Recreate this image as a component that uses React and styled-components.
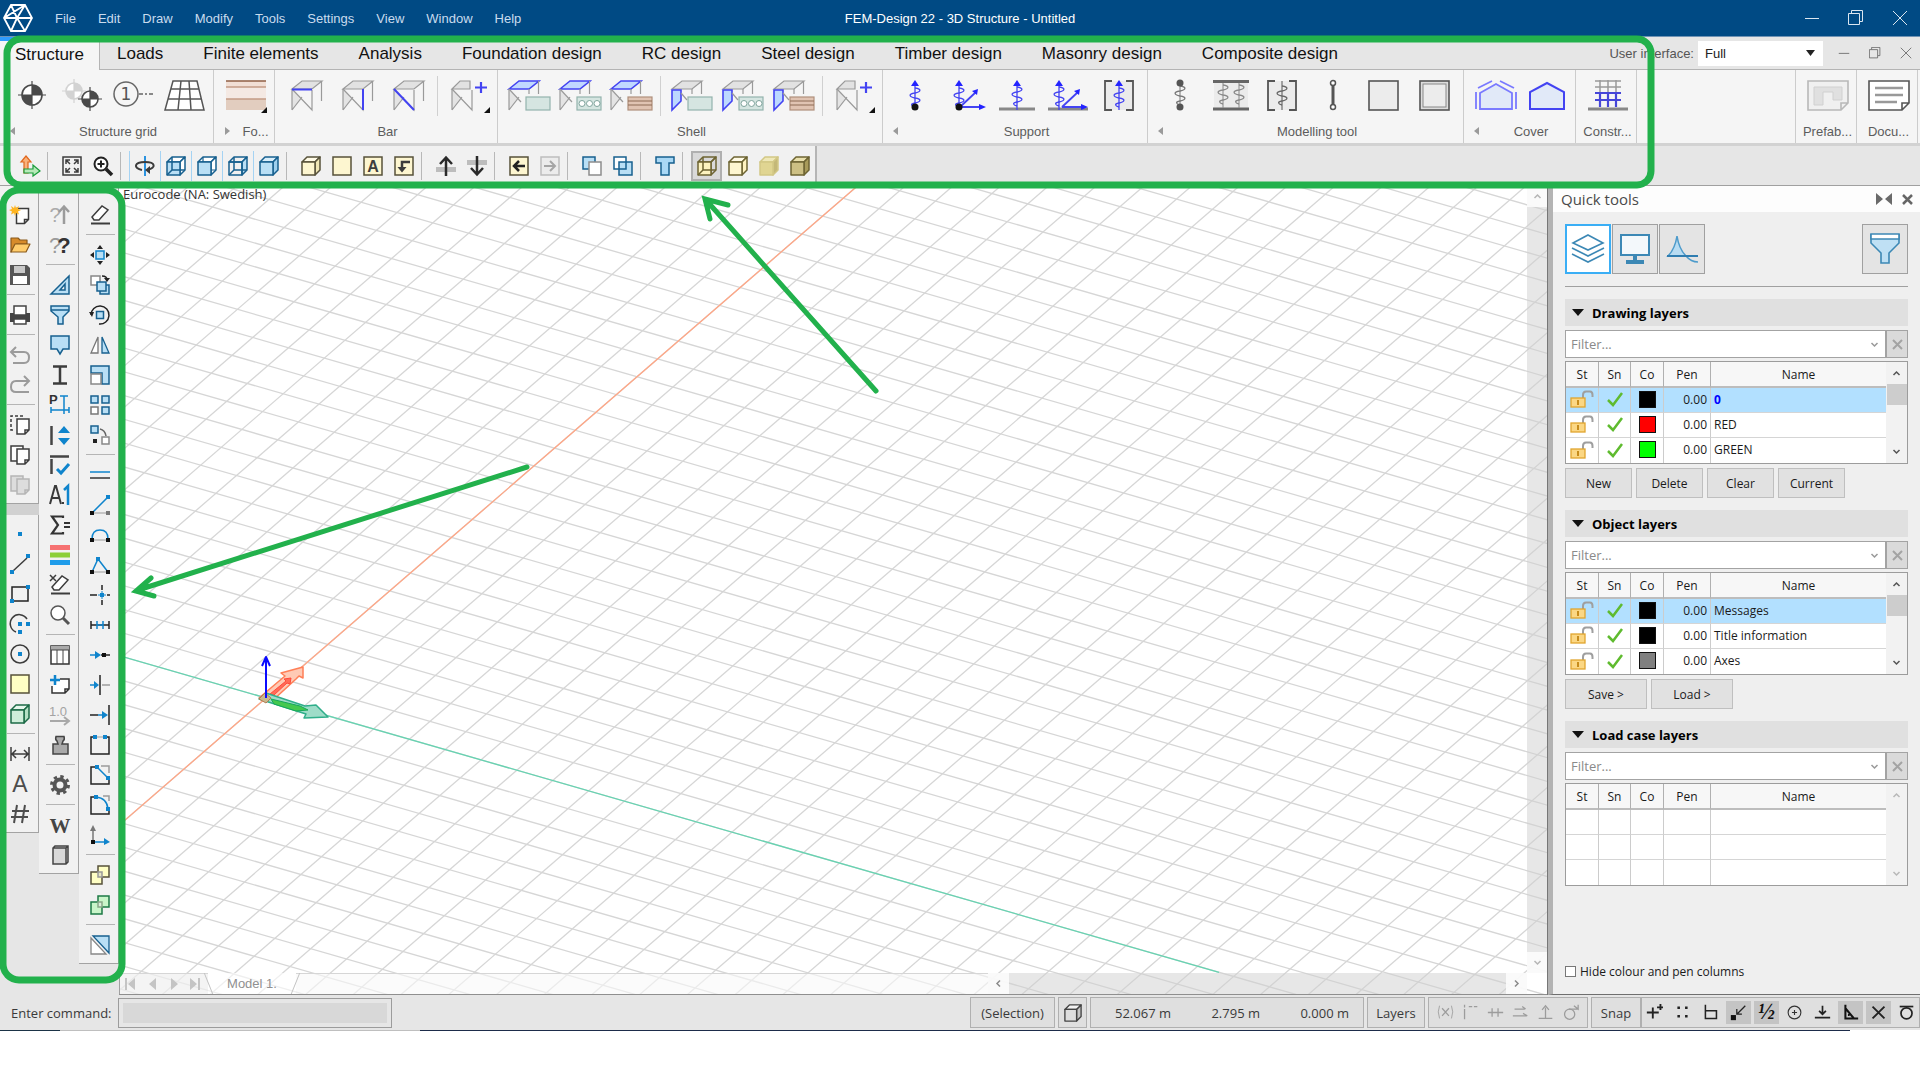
import React from 'react';
import styled, { createGlobalStyle, css } from 'styled-components';

const GlobalStyle = createGlobalStyle`
  * {
    box-sizing: border-box;
  }

  body {
    margin: 0;
    background: #ffffff;
    font-family: "Open Sans", "Noto Sans", sans-serif;
    font-size: 12px;
    color: #1a1a1a;
  }

  button, input, select {
    font: inherit;
    color: inherit;
    margin: 0;
  }

  svg {
    display: block;
    flex: none;
  }
`

/* ---------- colours used by the drawings ---------- */

const dark = '#3c3c3c';
const grey = '#9b9b9b';
const blue = '#0f84cc';
const navy = '#17608f';
const sky = '#b9dff5';
const cream = '#fdf6d0';
const olive = '#57523a';
const violet = '#4343f2';

/* ---------- small 20x20 icons ---------- */

const Dot = ({ x, y, c = blue }) => <rect x={x - 2} y={y - 2} width="4" height="4" fill={c} />;

const Cube = ({ front, top, side, line, wire }) => (
  <g stroke={line} strokeWidth="1.5" strokeLinejoin="round">
    <path d="M1 6 L6 1 H19 L14 6 Z" fill={top} />
    <path d="M14 6 L19 1 V14 L14 19 Z" fill={side} />
    <rect x="1" y="6" width="13" height="13" fill={front} />
    {wire && <path d="M6 1 V14 H19 M6 14 L1 19" fill="none" />}
  </g>
);

const Page = ({ x = 0, y = 0, fill = '#fff', line = dark }) => (
  <path
    d={`M${x} ${y} H${x + 12} V${y + 11} L${x + 8} ${y + 15} H${x} Z M${x + 8} ${y + 15} V${y + 11} H${x + 12}`}
    fill={fill} stroke={line} strokeWidth="1.5"
  />
);

const Eraser = () => (
  <g fill="none" stroke={dark} strokeWidth="1.5">
    <path d="M2 12 L12 1 L18 5 L9 15 H4 Z" fill="#fff" />
    <path d="M1 18.5 H20" strokeWidth="2" />
  </g>
);

const icons = {
  ucs: (
    <g strokeWidth="1.2">
      <path d="M4 17 V6 H1 L6 0 L11 6 H8 V17 Z" fill="#f9b27c" stroke="#e0661c" />
      <path d="M4 13 H13 V9 L20 15 L13 20 V17 H4 Z" fill="#b7eab9" stroke="#1a9c3a" />
    </g>
  ),
  fit: (
    <g fill="none" stroke={dark} strokeWidth="1.5">
      <rect x="1" y="1" width="18" height="18" />
      <path d="M4 8 V4 H8 M4 4 L8 8 M12 4 H16 V8 M16 4 L12 8 M4 12 V16 H8 M4 16 L8 12 M16 12 V16 H12 M16 16 L12 12" />
    </g>
  ),
  zoomIn: (
    <g fill="none" stroke="#222" strokeWidth="2">
      <circle cx="8" cy="8" r="6.5" fill="#fff" />
      <path d="M13 13 L19 19" strokeWidth="3.5" />
      <path d="M8 4.5 V11.5 M4.5 8 H11.5" />
    </g>
  ),
  orbit: (
    <g fill="none" stroke={dark} strokeWidth="2">
      <path d="M10 0 V20" stroke="#2b93e0" />
      <path d="M7 14 C-2 12 -1 6 10 6 C21 6 21 12 13 13.5" />
      <path d="M10 14 L15 10 V18 Z" fill={dark} stroke="none" />
    </g>
  ),
  cubeWire: <Cube front={sky} top="#fff" side="#fff" line={navy} wire />,
  cubeFront: (
    <g>
      <Cube front={sky} top="#fff" side="#fff" line={navy} />
      <path d="M6 1 V6 M14 14 H19" stroke={navy} strokeWidth="1.2" />
    </g>
  ),
  cubeOpen: <Cube front="none" top="none" side={sky} line={navy} wire />,
  cubeBlue: <Cube front={sky} top="#d9eefa" side="#9fd0ee" line={navy} />,
  cubeCream: <Cube front={cream} top="#fffbe6" side="#efe6b5" line={olive} />,
  square: <rect x="1" y="1" width="18" height="18" fill={cream} stroke={olive} strokeWidth="1.5" />,
  letterA: (
    <g>
      <rect x="1" y="1" width="18" height="18" fill={cream} stroke={olive} strokeWidth="1.5" />
      <text x="10" y="16" textAnchor="middle" fontSize="16" fontWeight="bold" fill="#3f3f3f" fontFamily="Liberation Sans, sans-serif">A</text>
    </g>
  ),
  turn: (
    <g>
      <rect x="1" y="1" width="18" height="18" fill={cream} stroke={olive} strokeWidth="1.5" />
      <path d="M16 6 H8 V14" fill="none" stroke={dark} strokeWidth="2.5" />
      <path d="M3.5 11 H12.5 L8 16.5 Z" fill={dark} />
    </g>
  ),
  raise: (
    <g>
      <path d="M0 11 H20 V16 H0 Z" fill="#bdbdbd" />
      <path d="M10 20 V3 M4 8 L10 1.5 L16 8" fill="none" stroke="#2a2a2a" strokeWidth="2.5" />
    </g>
  ),
  lower: (
    <g>
      <path d="M0 4 H20 V9 H0 Z" fill="#bdbdbd" />
      <path d="M10 0 V17 M4 12 L10 18.5 L16 12" fill="none" stroke="#2a2a2a" strokeWidth="2.5" />
    </g>
  ),
  back: (
    <g fill="none">
      <rect x="1" y="1" width="18" height="18" fill={cream} stroke={olive} strokeWidth="1.5" />
      <path d="M16 10 H5 M10 5 L5 10 L10 15" stroke="#222" strokeWidth="2.5" />
    </g>
  ),
  forward: (
    <g fill="none">
      <rect x="1" y="1" width="18" height="18" fill="#ececec" stroke="#bdbdbd" strokeWidth="1.5" />
      <path d="M4 10 H15 M10 5 L15 10 L10 15" stroke="#a5a5a5" strokeWidth="2" />
    </g>
  ),
  overA: (
    <g strokeWidth="1.5">
      <rect x="1" y="1" width="12" height="12" fill={sky} stroke={navy} />
      <rect x="7" y="6" width="12" height="13" fill="#fff" stroke="#8d8d8d" />
    </g>
  ),
  overB: (
    <g strokeWidth="1.5" stroke={navy}>
      <rect x="1" y="1" width="12" height="12" fill="#fff" />
      <rect x="6" y="6" width="13" height="13" fill={sky} />
      <path d="M6 13 H13 V6" fill="none" />
    </g>
  ),
  tee: <path d="M1 1 H19 V7 H14 V19 H6 V7 H1 Z" fill="#a9d8f5" stroke={navy} strokeWidth="1.5" />,
  shadeWire: <Cube front="#fdf3bf" top="none" side="none" line="#6d6433" wire />,
  shadeLight: <Cube front={cream} top="#fffbe6" side="#fff3c0" line="#6d6433" />,
  shadeFlat: <Cube front="#e0d592" top="#efe8b8" side="#c4b878" line="#d2c785" />,
  shadeFull: <Cube front="#cdc084" top="#e9e0ac" side="#a89b5a" line="#6d6433" />,

  /* file and drawing */
  newFile: (
    <g>
      <Page x={6.5} y={3.5} />
      <path d="M5 0 L6 3 L9 1 L8 4 L11 5 L8 6.5 L9 9.5 L6 8 L5 11 L4 8 L1 9.5 L2 6.5 L-1 5 L2 4 L1 1 L4 3 Z" fill="#ffb521" />
    </g>
  ),
  open: (
    <g stroke="#8a5a1c" strokeWidth="1.2" strokeLinejoin="round">
      <path d="M1 17 V3 H8 L10 5 H17 V9 H6 L1 17 Z" fill="#d78b2a" />
      <path d="M1 17 L5 9 H20 L16 17 Z" fill="#ffcc6b" />
    </g>
  ),
  save: (
    <g>
      <path d="M0 0 H17 L20 3 V20 H0 Z" fill="#555" />
      <rect x="4" y="1" width="11" height="7" fill="#c8c8c8" />
      <rect x="3" y="11" width="14" height="8" fill="#fff" />
    </g>
  ),
  print: (
    <g>
      <rect x="0" y="8" width="20" height="9" fill="#444" />
      <path d="M4 10 V1 H16 V10 Z" fill="#fff" stroke="#444" strokeWidth="1.5" />
      <path d="M4 14 H16 V19 H4 Z" fill="#fff" stroke="#444" strokeWidth="1.5" />
    </g>
  ),
  undo: <path d="M6 2 L1 7 L6 12 M1 7 H14 Q19 7 19 12.5 Q19 18 14 18 H3" fill="none" stroke={grey} strokeWidth="2" />,
  redo: <path d="M14 1 L19 6 L14 11 M19 6 H6 Q1 6 1 12 Q1 17 6 17 H19" fill="none" stroke={grey} strokeWidth="2" />,
  cut: (
    <g>
      <path d="M13 1 H1 V15 H5" fill="none" stroke={dark} strokeWidth="1.5" strokeDasharray="3 2" />
      <Page x={7} y={4} />
    </g>
  ),
  copy: <g><Page x={1} y={1} /><Page x={7} y={4} /></g>,
  paste: <g><Page x={1} y={1} fill="#ddd" line="#b5b5b5" /><Page x={7} y={4} fill="#ddd" line="#b5b5b5" /></g>,
  point: <rect x="8" y="8" width="4" height="4" fill={blue} />,
  line: <g><path d="M3 17 L17 4" stroke={dark} strokeWidth="1.5" /><Dot x={2} y={18} /><Dot x={18} y={2} /></g>,
  rect: <g><rect x="2" y="3" width="16" height="14" fill="none" stroke="#222" strokeWidth="1.5" /><Dot x={2} y={17} /><Dot x={18} y={3} /></g>,
  arc: (
    <g>
      <path d="M17 5 A9 9 0 1 0 6 18" fill="none" stroke={dark} strokeWidth="1.5" />
      <Dot x={10} y={10} /><Dot x={18} y={10} /><Dot x={10} y={18} />
    </g>
  ),
  circle: <g><circle cx="10" cy="10" r="9" fill="none" stroke={dark} strokeWidth="1.5" /><Dot x={10} y={10} /></g>,
  region: <rect x="1" y="1" width="18" height="18" fill="#ffffc4" stroke={olive} strokeWidth="1.5" />,
  solid: <Cube front="#cfeeda" top="#e6f7ec" side="#b4e0c4" line="#1d6b47" />,
  dimension: <path d="M1 3 V17 M19 3 V17 M2 10 H18 M6 6 L2 10 L6 14 M14 6 L18 10 L14 14" fill="none" stroke={dark} strokeWidth="1.5" />,
  text: <text x="10" y="18" textAnchor="middle" fontSize="23" fill="#4c4c4c" fontFamily="Liberation Sans, sans-serif">A</text>,
  hash: <path d="M7 1 L4 19 M15 1 L12 19 M2 7 H19 M1 13 H18" fill="none" stroke="#4c4c4c" strokeWidth="2" />,

  /* tools */
  askUp: (
    <g>
      <text x="5" y="17" textAnchor="middle" fontSize="20" fill="#ababab" fontFamily="Liberation Sans, sans-serif">?</text>
      <path d="M14 19 V3 M9 7 L14 1.5 L19 7" fill="none" stroke={grey} strokeWidth="2.5" />
    </g>
  ),
  ask: (
    <g fontFamily="Liberation Sans, sans-serif" textAnchor="middle" fontSize="22">
      <text x="5" y="18" fill="#9a9a9a">?</text>
      <text x="14" y="18" fill="#333" fontWeight="bold">?</text>
    </g>
  ),
  ruler: <path d="M1 19 L19 1 V19 Z M10 15 L15 9 V15 Z" fill={sky} fillRule="evenodd" stroke={navy} strokeWidth="1.5" />,
  funnel: <path d="M1 1 H19 V6 L13 12 V19 H8 V12 L1 6 Z M1 5 H19" fill={sky} stroke={navy} strokeWidth="1.5" />,
  bubble: <path d="M1 1 H19 V14 H13 L10 19 L7 14 H1 Z" fill={sky} stroke={navy} strokeWidth="1.5" />,
  profile: <path d="M3 1.5 H17 M10 1 V19 M3 18.5 H17" fill="none" stroke={dark} strokeWidth="2.5" />,
  profileDim: (
    <g>
      <text x="-1" y="9" fontSize="13" fontWeight="bold" fill="#333" fontFamily="Liberation Sans, sans-serif">P</text>
      <path d="M14 1 V19 M10 1 H18 M1 15 H19 M1 12 V18 M19 12 V18" fill="none" stroke={blue} strokeWidth="1.5" />
    </g>
  ),
  stretch: (
    <g>
      <path d="M1.5 1 V20" stroke="#444" strokeWidth="2.5" />
      <path d="M8 8 H20 L14 1 Z M8 13 H20 L14 20 Z" fill={blue} />
    </g>
  ),
  confirm: (
    <g fill="none" strokeWidth="2.5">
      <path d="M0 1.5 H19 M1.5 4 V19" stroke="#444" />
      <path d="M7 14 L11 18 L19 9" stroke={blue} strokeWidth="3" />
    </g>
  ),
  decimals: (
    <g>
      <path d="M0 19 L5 1 H6 L11 19 M2 13 H9" fill="none" stroke="#3a3a3a" strokeWidth="2" />
      <rect x="12" y="17" width="2" height="2" fill="#3a3a3a" />
      <path d="M14 5 L18 1 V20" fill="none" stroke={blue} strokeWidth="2.5" />
    </g>
  ),
  sum: <path d="M13 3 V1.5 H2 L8 10 L2 18.5 H13 V17 M14 8 H20 M14 12 H20" fill="none" stroke="#333" strokeWidth="2.2" />,
  bands: <g><rect y="0" width="20" height="5" fill="#f67272" /><rect y="7.5" width="20" height="5" fill="#8ccf38" /><rect y="15" width="20" height="5" fill="#1f9cea" /></g>,
  eraseX: <g><Eraser /><path d="M0 0 L6 6 M6 0 L0 6" stroke={dark} strokeWidth="1.5" /></g>,
  search: <g fill="none" stroke="#555"><circle cx="8" cy="8" r="7" fill="#fff" strokeWidth="1.5" /><path d="M13 13 L19 19" strokeWidth="3" /></g>,
  table: <g><rect x="1" y="1" width="18" height="18" fill="#fff" stroke="#333" strokeWidth="1.5" /><rect x="1" y="1" width="18" height="4" fill="#aaa" /><path d="M1 5 H19 M7 5 V19 M13 5 V19" stroke="#444" /></g>,
  addPage: <g><path d="M10 4 H19 V14 L15 18 H2 V11 M15 18 V14 H19" fill="#fff" stroke="#333" strokeWidth="1.5" /><path d="M5 0 V10 M0 5 H10" stroke={blue} strokeWidth="2.5" /></g>,
  one: (
    <g>
      <text x="-1" y="11" fontSize="13" fill="#a3a3a3" fontFamily="Liberation Sans, sans-serif">1.0</text>
      <path d="M0 16 H18 M14 12 L19 16 L14 20" fill="none" stroke="#a8a8a8" strokeWidth="2" />
    </g>
  ),
  weight: <path d="M3 19 V9 H8 L7 6 Q5 5 6 1.5 H14 Q15 5 13 6 L12 9 H18 V19 Z" fill="#a9a9a9" stroke="#444" strokeWidth="1.5" />,
  gear: (
    <g fill="none" stroke="#555">
      <circle cx="10" cy="10" r="5.5" strokeWidth="4" />
      <circle cx="10" cy="10" r="8.5" strokeWidth="3" strokeDasharray="3.34 3.34" />
    </g>
  ),
  word: <text x="10" y="18" textAnchor="middle" fontSize="21" fontWeight="bold" fill="#444" fontFamily="Liberation Serif, serif">W</text>,
  book: <path d="M3 3 L5 1 H18 V17 L16 19 H3 Z M3 3 H16 V19 M16 3 L18 1" fill="#d8d8d8" stroke="#444" strokeWidth="1.5" />,

  /* modify */
  eraser: <Eraser />,
  move: (
    <g>
      <rect x="6" y="6" width="8" height="8" fill={sky} stroke={blue} strokeWidth="1.5" />
      <path d="M10 0 L13 4 H7 Z M10 20 L13 16 H7 Z M0 10 L4 7 V13 Z M20 10 L16 7 V13 Z" fill="#222" />
    </g>
  ),
  duplicate: (
    <g strokeWidth="1.5">
      <rect x="1" y="1" width="9" height="9" fill="#fff" stroke="#888" />
      <rect x="10" y="10" width="9" height="9" fill={sky} stroke={navy} />
      <rect x="7" y="7" width="9" height="9" fill={sky} stroke={navy} />
      <path d="M12 1 Q17 1 17 5" fill="none" stroke="#222" />
      <path d="M14 3 H20 L17 7 Z" fill="#222" />
    </g>
  ),
  rotate: (
    <g fill="none" stroke="#222" strokeWidth="1.5">
      <path d="M1 10 A9 9 0 1 1 9 19" />
      <path d="M-1 7 H4 L2 12 Z" fill="#222" stroke="none" />
      <rect x="6.5" y="6.5" width="7" height="7" fill={sky} stroke={navy} />
    </g>
  ),
  mirror: <g strokeWidth="1.3"><path d="M8 2 V18 H1 Z" fill="#fff" stroke="#777" /><path d="M12 2 V18 H19 Z" fill={sky} stroke={navy} /></g>,
  scale: <g strokeWidth="1.5"><path d="M1 1 H19 V19 H12 V8 H1 Z" fill={sky} stroke={navy} /><rect x="1" y="9" width="10" height="10" fill="#fff" stroke="#888" /></g>,
  array: (
    <g strokeWidth="1.5" stroke={navy} fill={sky}>
      <rect x="1" y="1" width="7" height="7" /><rect x="12" y="1" width="7" height="7" />
      <rect x="1" y="12" width="7" height="7" fill="#fff" stroke="#777" /><rect x="12" y="12" width="7" height="7" />
    </g>
  ),
  align: (
    <g strokeWidth="1.5">
      <rect x="1" y="1" width="7" height="7" fill={sky} stroke={navy} />
      <rect x="12" y="12" width="7" height="7" fill="#fff" stroke="#888" />
      <path d="M10 4 Q15 5 16 11" fill="none" stroke="#666" />
      <Dot x={5} y={16} c="#222" />
    </g>
  ),
  parallel: <g strokeWidth="1.5"><path d="M0 7 H20" stroke={blue} /><path d="M0 13 H20" stroke="#333" /></g>,
  editLine: <g><path d="M2 18 L18 2" stroke={blue} strokeWidth="1.5" /><path d="M2 18 H16" stroke={grey} /><Dot x={2} y={18} c="#111" /><Dot x={18} y={18} c="#777" /><Dot x={18} y={2} /></g>,
  editArc: <g><path d="M2 14 Q2 5 10 5 Q18 5 18 14" fill="none" stroke={blue} strokeWidth="1.5" /><path d="M4 15 H16" stroke={grey} /><Dot x={2} y={15} c="#111" /><Dot x={18} y={15} c="#111" /></g>,
  editPoly: <g><path d="M2 17 L8 4 L18 17" fill="none" stroke={blue} strokeWidth="1.5" /><path d="M4 17 H16" stroke={grey} /><Dot x={2} y={17} c="#111" /><Dot x={18} y={17} c="#111" /><Dot x={8} y={4} /></g>,
  cross: <g><path d="M0 10 H7 M17 10 H20 M12 0 V5 M12 15 V20" stroke="#222" strokeWidth="1.5" /><path d="M8 10 H16 M12 6 V14" stroke={blue} /><Dot x={12} y={10} /></g>,
  divide: <g strokeWidth="1.5"><path d="M1 6 V14 M19 6 V14 M1 10 H19" stroke="#222" /><path d="M7 6 V14 M13 6 V14 M7 10 H13" stroke={blue} /></g>,
  join: <g><path d="M0 10 H6" stroke={blue} strokeWidth="1.5" /><path d="M5 6 L11 10 L5 14 Z" fill={blue} /><path d="M11 10 H20" stroke="#222" strokeWidth="1.5" /><Dot x={14} y={10} c="#111" /></g>,
  trim: <g><path d="M0 10 H5" stroke={blue} strokeWidth="1.5" /><path d="M4 6 L9 10 L4 14 Z" fill={blue} /><path d="M10 0 V20" stroke="#222" strokeWidth="1.5" /><path d="M12 10 H20" stroke={grey} strokeWidth="1.5" /></g>,
  extend: <g><path d="M0 10 H8" stroke="#222" strokeWidth="1.5" /><path d="M8 10 H13" stroke={blue} strokeWidth="1.5" /><path d="M12 6 L18 10 L12 14 Z" fill={blue} /><path d="M19 0 V20" stroke="#222" strokeWidth="1.5" /></g>,
  openRect: <g><path d="M5 2 H1 V19 H19 V2 H15" fill="none" stroke="#222" strokeWidth="1.5" /><path d="M7 2 H13" stroke={grey} /><Dot x={5} y={2} /><Dot x={15} y={2} /></g>,
  chamfer: <g fill="none" strokeWidth="1.5"><path d="M6 2 H1 V19 H19 V14" stroke="#222" /><path d="M11 1 H19 V8" stroke={grey} /><path d="M7 2 L18 13" stroke={blue} /><Dot x={7} y={2} /><Dot x={18} y={13} /></g>,
  fillet: <g fill="none" strokeWidth="1.5"><path d="M6 2 H1 V19 H19 V15" stroke="#222" /><path d="M13 1 H19 V6" stroke={grey} /><path d="M6 2 Q17 3 18 14" stroke={blue} /><Dot x={6} y={2} /><Dot x={18} y={14} /></g>,
  axes: <g><path d="M3 16 V4" stroke="#777" strokeWidth="1.5" /><path d="M0 6 H6 L3 0 Z" fill="#777" /><path d="M3 17 H15" stroke={blue} strokeWidth="1.5" /><path d="M14 13 V20 L20 17 Z" fill={blue} /><Dot x={3} y={17} c="#111" /></g>,
  unionY: <g strokeWidth="1.5" stroke={olive}><path d="M8 1 H19 V12 H12 V19 H1 V7 H8 Z" fill="#ffffc4" /><path d="M8 7 H12 V12 H8 Z" fill="#e9e9c4" stroke="#999" /></g>,
  unionG: <g strokeWidth="1.5" stroke="#1d7a45"><path d="M8 1 H19 V12 H12 V19 H1 V7 H8 Z" fill="#c9f5c9" /><path d="M8 7 H12 V12 H8 Z" fill="#dfeedd" stroke="#88a888" /></g>,
  split: <g strokeWidth="1.3"><path d="M3 1 H19 V18 Z" fill={sky} stroke={navy} /><path d="M1 3 V19 H16 Z" fill="#fff" stroke="#888" /></g>,

  /* status bar */
  axisX: <g><path d="M3 2 Q0 9 3 17 M17 2 Q20 9 17 17" fill="none" stroke="currentColor" /><path d="M6 5 L14 14 M14 5 L6 14" stroke="currentColor" strokeWidth="1.5" /></g>,
  guideV: <path d="M3 6 V18 M3 1 V4 M8 3 H12 M14 3 H18" stroke="currentColor" strokeWidth="1.5" />,
  guideH: <path d="M1 10 H19 M6 5 V15 M13 5 V15" stroke="currentColor" strokeWidth="1.5" />,
  guideP: <path d="M3 6 H15 M1 14 H17 M12 3 L16 6 M13 11 L18 14" fill="none" stroke="currentColor" strokeWidth="1.5" />,
  guideT: <path d="M2 17 H18 M10 17 V4 M6 7 L10 2 L14 7" fill="none" stroke="currentColor" strokeWidth="1.5" />,
  tangent: <g fill="none" stroke="currentColor" strokeWidth="1.5"><circle cx="9" cy="12" r="6" /><path d="M8 6 H19 M14 2 L19 6 V1" /></g>,
  snapPlus: <path d="M8 4 V17 M1 10 H15 M17 0 V7 M13 4 H20" stroke="#222" strokeWidth="2.2" />,
  snapGrid: <path d="M4 3 h3 v3 h-3z M13 3 h3 v3 h-3z M4 13 h3 v3 h-3z M13 13 h3 v3 h-3z" fill="#222" />,
  snapEnd: <path d="M4 1 V17 H17 V8 H4" fill="none" stroke="#222" strokeWidth="1.8" />,
  snapNode: <g><rect x="1" y="13" width="6" height="6" fill="#111" /><path d="M18 2 L8 12 M8 6 V12 H14" fill="none" stroke="#222" strokeWidth="1.5" /></g>,
  snapHalf: <text x="10" y="18" textAnchor="middle" fontSize="26" fontWeight="bold" fontStyle="italic" fill="#111" fontFamily="Liberation Serif, serif">½</text>,
  snapCenter: <g fill="none" stroke="#333" strokeWidth="1.3"><circle cx="10" cy="10" r="7.5" /><path d="M10 7 V13 M7 10 H13" /></g>,
  snapPerp: <path d="M1 16 H19 M10 2 V12 M6 8 L10 12 L14 8" fill="none" stroke="#222" strokeWidth="2" />,
  snapAngle: <path d="M4 1 V17 H19 M4 5 L14 17 M7 13 H9" fill="none" stroke="#111" strokeWidth="2.4" />,
  snapCross: <path d="M3 3 L17 17 M17 3 L3 17" stroke="#222" strokeWidth="2.2" />,
  snapTan: <g fill="none" stroke="#222" strokeWidth="2"><path d="M2 3 H18" /><circle cx="10" cy="11" r="6.5" /></g>,
  box: <Cube front="#dedede" top="#f4f4f4" side="#c5c5c5" line="#444" />,
};

const Icon = ({ name, size = 20 }) => (
  <svg width={size} height={size} viewBox="0 0 20 20" overflow="visible" aria-hidden="true">{icons[name]}</svg>
);

/* ---------- ribbon drawings, 42x32 ---------- */

const Frame = ({ x = 6, top, part, cut }) => (
  <g transform={`translate(${x} 0)`} fill="none" stroke="#9a9a9a" strokeWidth="1.2">
    <path d="M0 9 L9 20 L0 30 Z" fill="#e4e4e4" stroke="none" />
    <path
      d={cut ? 'M0 9 L8 1 H18 V9 Z' : 'M0 9 L10 1 H30 L20 9 Z'}
      fill={top ? '#c1d8ff' : '#e2e2e2'} stroke={top ? violet : '#9a9a9a'} strokeWidth={top ? 1.6 : 1.2}
    />
    {part === 'wall' ? (
      <path d="M0 10 L9 10 V21 L0 30 Z" fill="#bcd8ff" stroke={violet} strokeWidth="1.6" />
    ) : (
      <path d="M0 9 V30 M0 30 L10 17" />
    )}
    {!cut && <path d={part === 'wall' || top ? 'M29.5 1 V14 M20 9 V14' : 'M29.5 1 V21'} />}
    {!top && part !== 'wall' && <path d="M0 9 L20 30 V10" />}
    {top && <path d="M0 9 L12 22" />}
    {part === 'wall' && <path d="M9 13 L15 20" />}
    {part === 'beam' && <path d="M0 9.5 H20" stroke={violet} strokeWidth="2" />}
    {part === 'column' && <path d="M20 9 V30" stroke={violet} strokeWidth="2" />}
    {part === 'brace' && <path d="M0 9 L20 30" stroke={violet} strokeWidth="2" />}
  </g>
);

const Material = ({ kind }) => (
  <g>
    <rect x="17" y="17" width="24" height="13" fill={kind === 'timber' ? '#e0c3b2' : '#d5e5e1'} stroke={kind === 'timber' ? '#b0907c' : '#93b3ad'} strokeWidth="1.2" />
    {kind === 'hollow' && <g fill="#fff" stroke="#7fa39c"><circle cx="22" cy="23.5" r="3" /><circle cx="29.5" cy="23.5" r="3" /><circle cx="37" cy="23.5" r="3" /></g>}
    {kind === 'timber' && <path d="M17 21 H41 M17 25 H41" stroke="#8d6a55" />}
  </g>
);

const Coil = ({ x = 21, c = violet, top = 8 }) => (
  <path
    d={`M${x} ${top} C${x + 7} ${top + 1} ${x + 6} ${top + 4} ${x} ${top + 5} C${x - 7} ${top + 6} ${x - 6} ${top + 9} ${x} ${top + 10} C${x + 7} ${top + 11} ${x + 6} ${top + 14} ${x} ${top + 15} C${x - 5} ${top + 16} ${x - 4} ${top + 18} ${x} ${top + 19}`}
    fill="none" stroke={c} strokeWidth="1.3"
  />
);

const UpArrow = ({ x = 21 }) => (
  <g><path d={`M${x} 30 V5`} stroke={violet} strokeWidth="1.3" /><path d={`M${x - 4} 6 H${x + 4} L${x} 0 Z`} fill="#2323ff" /></g>
);

const SideArrows = () => (
  <g stroke={violet} fill="#2323ff" strokeWidth="1.8">
    <path d="M15 27 H34 M15 27 L31 12" fill="none" />
    <path d="M33 9 L32 15 L27 11 Z M41 27 L34 24 V30 Z" stroke="none" />
  </g>
);

const Brackets = ({ c = '#555' }) => (
  <g>
    <rect x="7" y="1" width="28" height="29" fill="#ebebeb" />
    <path d="M14 1 H7 V30 H14 M28 1 H35 V30 H28" fill="none" stroke={c} strokeWidth="1.8" />
  </g>
);

const Target = ({ x, y, r, c }) => (
  <g stroke={c}>
    <circle cx={x} cy={y} r={r} fill="#fff" strokeWidth="1.6" />
    <path d={`M${x} ${y} V${y - r} A${r} ${r} 0 0 1 ${x + r} ${y} H${x - r} A${r} ${r} 0 0 0 ${x} ${y + r} Z`} fill={c} stroke="none" />
    <path d={`M${x - r - 4} ${y} H${x + r + 4} M${x} ${y - r - 4} V${y + r + 4}`} strokeWidth="1.2" />
  </g>
);

const Plus = () => <path d="M33 2 V13 M27 7.5 H39" stroke={violet} strokeWidth="2.2" />;

const drawings = {
  axis: <Target x={21} y={15} r={10} c="#4a4a4a" />,
  axes: <g><Target x={12} y={11} r={8} c="#d3d3d3" /><Target x={28} y={19} r={8} c="#4a4a4a" /></g>,
  gridLine: (
    <g fill="none" stroke="#666" strokeWidth="1.5">
      <circle cx="13" cy="14" r="12" />
      <path d="M26 14 H30 M32 14 H34 M36 14 H40" />
      <text x="13" y="20" textAnchor="middle" fontSize="17" fill="#555" stroke="none" fontFamily="DejaVu Sans, sans-serif">1</text>
    </g>
  ),
  mesh: <path d="M9 1 H33 L40 30 H1 Z M7 9 H35 M4 19 H37 M17 1 L14 30 M25 1 L27 30" fill="#fff" stroke="#555" strokeWidth="1.5" />,
  soil: (
    <g>
      <rect x="1" y="1" width="40" height="6" fill="#f1dfd5" /><rect x="1" y="7" width="40" height="12" fill="#f4e9e3" /><rect x="1" y="19" width="40" height="11" fill="#e2cdbf" />
      <path d="M1 1 H41" stroke="#8f5f45" strokeWidth="1.5" /><path d="M1 7 H41 M1 19 H41" stroke="#c39c86" strokeWidth="1.5" />
    </g>
  ),
  beam: <Frame part="beam" />,
  column: <Frame part="column" />,
  brace: <Frame part="brace" />,
  frameAdd: <g><Frame x={4} cut /><Plus /></g>,
  plate: <g><Frame x={0} top /><Material /></g>,
  plateHollow: <g><Frame x={0} top /><Material kind="hollow" /></g>,
  plateTimber: <g><Frame x={0} top /><Material kind="timber" /></g>,
  wall: <g><Frame x={1} part="wall" /><Material /></g>,
  wallHollow: <g><Frame x={1} part="wall" /><Material kind="hollow" /></g>,
  wallTimber: <g><Frame x={1} part="wall" /><Material kind="timber" /></g>,
  spring: <g><UpArrow /><Coil /><circle cx="21" cy="27" r="3.5" fill="#111" /></g>,
  spring3: <g><UpArrow x={14} /><Coil x={14} /><SideArrows /><circle cx="14" cy="27" r="3.5" fill="#111" /></g>,
  lineSpring: <g><path d="M3 29 H39" stroke="#888" strokeWidth="3" /><UpArrow /><Coil top={7} /></g>,
  lineSpring3: <g><path d="M1 29 H41" stroke="#888" strokeWidth="3" /><UpArrow x={12} /><Coil x={12} top={7} /><SideArrows /></g>,
  surfaceSpring: <g><Brackets /><UpArrow /><Coil /></g>,
  connection: <g><path d="M21 3 V28" stroke="#777" /><Coil c="#777" top={6} /><circle cx="21" cy="3" r="3.5" fill="#555" /><circle cx="21" cy="27" r="3.5" fill="#555" /></g>,
  lineConnection: (
    <g>
      <path d="M4 3 H38 V28 H4 Z" fill="#ebebeb" /><path d="M3 1.5 H39 M3 29 H39" stroke="#666" strokeWidth="3" />
      <path d="M13 3 V28 M29 3 V28" stroke="#888" /><Coil x={13} c="#888" top={5} /><Coil x={29} c="#888" top={5} />
    </g>
  ),
  surfaceConnection: <g><Brackets /><path d="M21 1 V30" stroke="#555" /><Coil c="#666" top={6} /></g>,
  bar: <g fill="#fff" stroke="#555" strokeWidth="1.5"><path d="M21 5 V26" strokeWidth="3" /><circle cx="21" cy="3" r="2.5" /><circle cx="21" cy="27" r="2.5" /></g>,
  plane: <rect x="6" y="1" width="29" height="29" fill="#ececec" stroke="#555" strokeWidth="1.6" />,
  diaphragm: <g><rect x="6" y="1" width="29" height="29" fill="#ddd" stroke="#555" strokeWidth="1.6" /><rect x="9" y="4" width="23" height="23" fill="#ececec" stroke="#888" /></g>,
  coverDouble: <g fill="none" stroke="#7a7aff" strokeWidth="1.8"><path d="M5 29 V13 L21 4 L37 13 V29 Z" fill="#e1e9f8" /><path d="M1 29 V12 M41 29 V12 M3 8 L17 1 M25 1 L39 8" /></g>,
  cover: <path d="M4 29 V12 L21 3 L38 12 V29 Z" fill="#e1e9f8" stroke={violet} strokeWidth="2" />,
  construction: (
    <g fill="none">
      <path d="M8 1 H34 M8 7 H34 M13 0 V12 M21 0 V12 M29 0 V12" stroke="#999" strokeWidth="1.5" />
      <path d="M8 13 H34 M8 20 H34 M13 13 V27 M21 13 V27 M29 13 V27" stroke="#4646d8" strokeWidth="2.2" />
      <path d="M1 29 H41" stroke="#888" strokeWidth="3" />
    </g>
  ),
  prefab: <g fill="none"><path d="M1 1 H41 V23 L34 30 H1 Z M34 30 V23 H41" fill="#f0f0f0" stroke="#b8b8b8" strokeWidth="1.6" /><path d="M7 25 V7 H35 V20 H26 V12 H16 V25 Z" fill="#e0e0e0" stroke="#d0d0d0" /></g>,
  docs: <g fill="none"><path d="M1 1 H41 V23 L34 30 H1 Z M34 30 V23 H41" fill="#fff" stroke="#555" strokeWidth="1.6" /><path d="M7 8 H35 M7 15 H35 M7 22 H29" stroke="#999" strokeWidth="2.5" /></g>,
};

/* ---------- page ---------- */

const App = styled.div`
  position: relative;
  display: flex;
  flex-direction: column;
  min-height: 100vh;
  padding-bottom: 49px;
`

const plainButton = css`
  padding: 0;
  border: 0;
  background: none;
  display: flex;
  align-items: center;
  justify-content: center;
`

const TitleBar = styled.header`
  display: grid;
  grid-template-columns: 1fr auto 1fr;
  align-items: center;
  height: 37px;
  background: #004a84;
  border-bottom: 1px solid #6f93b5;
  font-family: "Liberation Sans", sans-serif;
  font-size: 13px;
  color: #ffffff;
`

const MenuBar = styled.nav`
  display: flex;
  align-items: center;
  padding-left: 3px;
`

const MenuButton = styled.button`
  ${plainButton}
  padding: 0 11px;
  color: #c9dcee;
`

const Logo = styled.svg`
  margin-right: 11px;
`

const WindowButtons = styled.div`
  display: flex;
  align-items: center;
  justify-content: flex-end;
  padding: 0 ${p => p.$pad}px 0 13px;
  gap: ${p => p.$gap}px;
  color: ${p => p.$color};
`

const WindowButton = styled.button`
  ${plainButton}
  width: 16px;
  height: 20px;
  color: inherit;
`

const TabBar = styled.div`
  display: flex;
  align-items: stretch;
  height: 33px;
  background: #e6e6e6;
  border-bottom: 1px solid #b4b4b4;
  font-family: "Liberation Sans", sans-serif;
  font-size: 17px;
  color: #111111;
`

const Tab = styled.button`
  ${plainButton}
  padding: 2px 23px 0 17px;
  font-size: 17px;
  white-space: nowrap;

  ${p => p.$active && css`
    height: 33px;
    padding: 0 15px 2px;
    background: #f5f5f5;
    border-top: 4px solid #2f9cff;
    border-right: 1px solid #b4b4b4;
  `}
`

const Spacer = styled.div`
  flex: 1;
`

const InterfacePicker = styled.label`
  display: flex;
  align-items: center;
  gap: 4px;
  font-size: 13px;
  color: #555555;
`

const SelectBox = styled.div`
  display: grid;
  align-items: center;
  width: 125px;
  height: 25px;
  background: #ffffff;

  & > * {
    grid-area: 1 / 1;
  }

  svg {
    justify-self: end;
    margin-right: 8px;
    pointer-events: none;
  }
`

const Select = styled.select`
  appearance: none;
  width: 100%;
  height: 100%;
  padding: 0 7px;
  border: 0;
  background: transparent;
  color: #222222;
`

const Ribbon = styled.div`
  display: flex;
  height: 76px;
  background: #f5f5f5;
  border-bottom: 3px solid #d2d2d2;
  font-family: "Liberation Sans", sans-serif;
  font-size: 13px;
  color: #5c5c5c;
`

const Group = styled.section`
  display: flex;
  flex-direction: column;
  padding: 9px 3px 0 6px;
  border-right: 1px solid #cccccc;
`

const RibbonEdge = styled.div`
  display: flex;
  padding-right: 2px;
  border-left: 1px solid #cccccc;
`

const GroupTools = styled.div`
  display: flex;
  align-items: center;
  height: 34px;
`

const GroupLabel = styled.div`
  display: grid;
  grid-template-columns: ${p => (p.$arrow ? '20px 1fr' : '1fr')};
  align-items: center;
  height: 20px;
  margin-top: 8px;
  text-align: center;
  white-space: nowrap;

  svg {
    margin-left: 4px;
  }
`

const RibbonButton = styled.button`
  ${plainButton}
  position: relative;
  width: 51px;
  height: 34px;
`

const Corner = styled.span`
  position: absolute;
  right: 4px;
  bottom: 0;
  border: 3px solid;
  border-color: transparent #111111 #111111 transparent;
`

const RibbonLine = styled.span`
  width: 1px;
  height: 40px;
  margin: 0 5px 0 3px;
  background: #d0d0d0;
`

const ViewRow = styled.div`
  display: flex;
  height: 40px;
  background: #e6e6e6;
  border-bottom: 1px solid #a0a0a0;
`

const ViewBar = styled.div`
  display: flex;
  align-items: center;
  padding-left: 14px;
  background: #f1f1f1;
  border-right: 2px solid #b5b5b5;
`

const ViewButton = styled.button`
  ${plainButton}
  width: 31px;
  height: 30px;
  border-left: 1px solid ${p => (p.$view ? '#a5d3f3' : 'transparent')};

  ${p => p.$active && css`
    background: #d9d9d9;
    border: 2px solid #b0b0b0;
  `}
`

const ViewLine = styled.span`
  width: 1px;
  height: 28px;
  margin: 0 8px 0 2px;
  background: #b8b8b8;
`

const Workspace = styled.main`
  display: flex;
  flex: 1;
`

const Dock = styled.aside`
  display: flex;
  flex: none;
  align-items: flex-start;
  background: #e6e6e6;
`

const DockColumn = styled.div`
  width: ${p => (p.$first ? 39 : 40)}px;
`

const Palette = styled.div`
  padding: ${p => (p.$second ? 4 : 14)}px 0 3px 2px;
  background: #f1f1f1;
  border-right: 1px solid #a3a3a3;
  border-bottom: 1px solid #a3a3a3;
`

const PaletteGap = styled.div`
  height: 11px;
  background: #d1d1d1;
`

const ToolButton = styled.button`
  ${plainButton}
  width: 100%;
  height: 30px;
`

const ToolLine = styled.div`
  height: 10px;
  padding: 4px 3px 0 5px;

  &::before {
    content: "";
    display: block;
    height: 1px;
    background: #b5b5b5;
  }
`

const Viewport = styled.section`
  position: relative;
  display: flex;
  flex-direction: column;
  flex: 1;
  min-width: 0;
  background: #ffffff;
  border-bottom: 1px solid #8f8f8f;
`

const Scene = styled.svg`
  position: absolute;
  inset: 0;
  width: 100%;
  height: 100%;
`

const SceneRow = styled.div`
  position: relative;
  display: flex;
  justify-content: space-between;
  flex: 1;
`

const Norm = styled.div`
  padding: 0 4px;
  font-size: 13px;
  line-height: 16px;
  color: #333333;
`

const VScroll = styled.div`
  display: flex;
  flex-direction: column;
  justify-content: space-between;
  width: 21px;
  background: rgba(208, 208, 208, 0.5);
`

const HScroll = styled.div`
  display: flex;
  justify-content: space-between;
  width: 539px;
  margin-right: 21px;
  background: rgba(208, 208, 208, 0.5);
`

const ScrollButton = styled.button`
  ${plainButton}
  width: 21px;
  height: 21px;
  background: rgba(252, 252, 252, 0.9);
  color: ${p => (p.$off ? '#b5b5b5' : '#8a8a8a')};
`

const SheetRow = styled.div`
  position: relative;
  display: flex;
  height: 21px;
`

const SheetTabs = styled.div`
  display: flex;
  flex: 1;
  border-left: 1px solid #a0a0a0;
  color: #8c8c8c;
  font-family: "Liberation Sans", sans-serif;
  font-size: 13px;
`

const SheetNav = styled.div`
  display: flex;
  align-items: center;
  width: 88px;
  padding-left: 2px;
  background: rgba(240, 240, 240, 0.7);
  border-top: 1px solid #d6d6d6;
`

const SheetTab = styled.button`
  ${plainButton}
  width: 88px;
  color: #909090;
  background: rgba(255, 255, 255, 0.6);

  &::before, &::after {
    content: "";
    height: 100%;
    border-left: 1px solid #c2c2c2;
    transform: skewX(22deg);
  }

  &::before {
    margin-right: auto;
  }

  &::after {
    margin-left: auto;
    transform: skewX(-22deg);
  }
`

const SheetRest = styled.div`
  flex: 1;
  background: rgba(248, 248, 248, 0.6);
  border-top: 1px solid #d6d6d6;
`

const Panel = styled.aside`
  display: flex;
  flex-direction: column;
  width: 372px;
  border-left: 5px solid #b3b3b3;
  border-bottom: 1px solid #6f6f6f;
  box-shadow: -1px 0 #777777;
  background: #efefef;
  position: relative;
`

const PanelTitle = styled.div`
  display: flex;
  align-items: center;
  gap: 7px;
  height: 26px;
  padding: 0 5px 0 8px;
  background: #fdfdfd;
  color: #4a4a4a;
`

const PanelHeading = styled.h1`
  flex: 1;
  margin: 0;
  font-size: 15px;
  font-weight: 400;
`

const PanelBody = styled.div`
  display: flex;
  flex-direction: column;
  flex: 1;
  gap: 12px;
  padding: 12px 12px 14px;
`

const ModeRow = styled.div`
  display: flex;
  gap: 1px;
  padding-bottom: 12px;
  border-bottom: 1px solid #a0a0a0;
`

const ModeButton = styled.button`
  ${plainButton}
  width: 46px;
  height: 50px;
  background: ${p => (p.$active ? '#ffffff' : '#e4e4e4')};
  border: ${p => (p.$active ? '2px solid #3aaef5' : '1px solid #a0a0a0')};
`

const Section = styled.section`
  display: flex;
  flex-direction: column;
`

const SectionTitle = styled.h2`
  display: flex;
  align-items: center;
  gap: 8px;
  height: 27px;
  margin: 0 0 4px;
  padding-left: 7px;
  background: #e0e0e0;
  font-size: 13px;
  font-weight: 700;
  color: #000000;
`

const FilterRow = styled.div`
  display: flex;
  height: 28px;
  margin-bottom: 3px;
`

const FilterField = styled.div`
  display: flex;
  align-items: center;
  flex: 1;
  padding-right: 6px;
  background: #ffffff;
  border: 1px solid #a3a3a3;
  color: #999999;
`

const FilterInput = styled.input`
  flex: 1;
  min-width: 0;
  padding: 0 5px;
  border: 0;
  outline: 0;
  background: none;
  font-size: 13px;

  &::placeholder {
    color: #8a8a8a;
  }
`

const ClearButton = styled.button`
  ${plainButton}
  width: 22px;
  background: #dadada;
  border: 1px solid #a3a3a3;
  color: #a3a3a3;
`

const LayerBox = styled.div`
  display: flex;
  background: #ffffff;
  border: 1px solid #9c9c9c;
`

const LayerTable = styled.table`
  flex: 1;
  table-layout: fixed;
  border-collapse: separate;
  border-spacing: 0;
  font-size: 12px;
  color: #1a1a1a;
`

const HeadCell = styled.th`
  width: ${p => p.$w || 'auto'};
  height: 26px;
  padding: 0;
  background: #f7f7f7;
  border-bottom: 2px solid #bdbdbd;
  border-right: 1px solid #b0b0b0;
  font-weight: 400;

  &:last-child {
    border-right: 0;
  }
`

const Cell = styled.td`
  height: 25px;
  padding: 0 3px 2px;
  border-right: 1px solid #cccccc;
  border-bottom: 1px solid #d5d5d5;
  text-align: ${p => p.$align || 'left'};
  white-space: nowrap;

  svg {
    margin: 0 auto;
  }

  &:last-child {
    border-right: 0;
  }
`

const Row = styled.tr`
  background: ${p => (p.$active ? '#b2e0ff' : '#ffffff')};

  &:last-child td {
    border-bottom: 0;
  }
`

const Current = styled.b`
  color: #0000ff;
`

const Swatch = styled.span`
  display: block;
  width: 17px;
  height: 17px;
  margin: 0 auto;
  border: 1px solid #111111;
  background: ${p => p.$color};
`

const TableScroll = styled.div`
  display: flex;
  flex-direction: column;
  align-items: center;
  width: 21px;
  padding: 7px 0;
  background: #f2f2f2;
  color: ${p => (p.$off ? '#b8b8b8' : '#555555')};
`

const Thumb = styled.span`
  width: 20px;
  height: 21px;
  margin: 6px 0 auto;
  background: ${p => (p.$off ? 'none' : '#cdcdcd')};
`

const ButtonRow = styled.div`
  display: flex;
  gap: 4px;
  margin-top: 4px;
`

const PushButton = styled.button`
  width: ${p => (p.$wide ? 82 : 67)}px;
  height: 30px;
  padding: 0;
  border: 1px solid #bfbfbf;
  background: #e1e1e1;
`

const CheckLabel = styled.label`
  display: flex;
  align-items: center;
  gap: 4px;
  margin-top: auto;
`

const Check = styled.input`
  appearance: none;
  width: 11px;
  height: 11px;
  border: 1px solid #777777;
  background: #ffffff;
`

const StatusBar = styled.footer`
  display: flex;
  align-items: center;
  gap: 3px;
  height: 35px;
  background: #e6e6e6;
  font-size: 13px;
  color: #3a3a3a;
`

const CommandLabel = styled.label`
  display: flex;
  align-items: center;
  gap: 6px;
  padding-left: 11px;
`

const CommandInput = styled.input`
  width: 274px;
  height: 30px;
  border: 1px solid #9c9c9c;
  outline: 4px solid #e6e6e6;
  outline-offset: -5px;
  background: #d8d8d8;
`

const Pane = styled.div`
  display: flex;
  align-items: center;
  height: 31px;
  padding: 0 ${p => p.$pad || 0}px;
  gap: ${p => p.$gap || 0}px;
  background: #dfdfdf;
  border: 1px solid #b0b0b0;
  color: ${p => (p.$off ? '#9c9c9c' : 'inherit')};
`

const PaneButton = styled.button`
  ${plainButton}
  width: ${p => p.$w}px;
  height: 31px;
  background: #dfdfdf;
  border: 1px solid #b0b0b0;
`

const CoordinatePane = styled(Pane)`
  gap: 9px;
  padding-right: 14px;
`

const Coordinate = styled.span`
  width: 80px;
  text-align: right;
`

const SnapGroup = styled.div`
  display: flex;
`

const SnapButton = styled.button`
  ${plainButton}
  width: 25px;
  height: 23px;
  color: inherit;
  background: ${p => (p.$active ? '#c4c4c4' : 'none')};
`

const TaskStrip = styled.div`
  display: flex;
  height: 1px;
`

const StripPart = styled.span`
  width: ${p => p.$w};
  background: ${p => p.$c};
`

const Markup = styled.svg`
  position: absolute;
  inset: 0;
  width: 100%;
  height: 100%;
  pointer-events: none;
`

/* ---------- data ---------- */

const menus = ['File', 'Edit', 'Draw', 'Modify', 'Tools', 'Settings', 'View', 'Window', 'Help'];

const tabs = [
  'Structure', 'Loads', 'Finite elements', 'Analysis', 'Foundation design', 'RC design',
  'Steel design', 'Timber design', 'Masonry design', 'Composite design',
];

// A trailing * marks a tool with a fly-out corner, | is a divider
const groups = [
  { label: 'Structure grid', arrow: 'left', tools: ['axis', 'axes', 'gridLine', 'mesh'] },
  { label: 'Fo...', arrow: 'right', tools: ['soil*'] },
  { label: 'Bar', tools: ['beam', 'column', 'brace', '|', 'frameAdd*'] },
  { label: 'Shell', tools: ['plate', 'plateHollow', 'plateTimber', '|', 'wall', 'wallHollow', 'wallTimber', '|', 'frameAdd*'] },
  { label: 'Support', arrow: 'left', tools: ['spring', 'spring3', 'lineSpring', 'lineSpring3', 'surfaceSpring'] },
  { label: 'Modelling tool', arrow: 'left', tools: ['connection', 'lineConnection', 'surfaceConnection', 'bar', 'plane', 'diaphragm'] },
  { label: 'Cover', arrow: 'left', tools: ['coverDouble', 'cover'] },
  { label: 'Constr...', tools: ['construction'] },
];

const sideGroups = [
  { label: 'Prefab...', tools: ['prefab'] },
  { label: 'Docu...', tools: ['docs'] },
];

const viewTools = [
  'ucs', '|', 'fit', 'zoomIn', '|', 'orbit', 'cubeWire', 'cubeFront', 'cubeOpen', 'cubeBlue', '|',
  'cubeCream', 'square', 'letterA', 'turn', '|', 'raise', 'lower', '|', 'back', 'forward', '|',
  'overA', 'overB', '|', 'tee', '|', 'shadeWire', 'shadeLight', 'shadeFlat', 'shadeFull',
];

const viewDirections = ['orbit', 'cubeWire', 'cubeFront', 'cubeOpen', 'cubeBlue'];

const fileTools = ['newFile', 'open', 'save', '|', 'print', '|', 'undo', 'redo', '|', 'cut', 'copy', 'paste'];
const drawTools = ['point', 'line', 'rect', 'arc', 'circle', 'region', 'solid', '|', 'dimension', 'text', 'hash'];
const generalTools = [
  'askUp', 'ask', '|', 'ruler', 'funnel', 'bubble', 'profile', 'profileDim', 'stretch', 'confirm', 'decimals', 'sum',
  'bands', 'eraseX', 'search', '|', 'table', 'addPage', 'one', 'weight', '|', 'gear', '|', 'word', 'book',
];
const modifyTools = [
  'eraser', '|', 'move', 'duplicate', 'rotate', 'mirror', 'scale', 'array', 'align', '|', 'parallel', 'editLine',
  'editArc', 'editPoly', 'cross', 'divide', 'join', 'trim', 'extend', 'openRect', 'chamfer', 'fillet', 'axes', '|',
  'unionY', 'unionG', '|', 'split',
];

const guides = ['axisX', 'guideV', 'guideH', 'guideP', 'guideT', 'tangent'];
const snaps = [
  ['snapPlus'], ['snapGrid'], ['snapEnd'], ['snapNode', true], ['snapHalf', true],
  ['snapCenter'], ['snapPerp'], ['snapAngle', true], ['snapCross', true], ['snapTan'],
];

const drawingLayers = [
  { name: '0', color: '#000000', current: true },
  { name: 'RED', color: '#ff0000' },
  { name: 'GREEN', color: '#00ff00' },
];

const objectLayers = [
  { name: 'Messages', color: '#000000' },
  { name: 'Title information', color: '#000000' },
  { name: 'Axes', color: '#808080' },
];

/* ---------- parts ---------- */

const Chevron = ({ turn = 0 }) => (
  <svg width="9" height="9" viewBox="0 0 9 9" aria-hidden="true">
    <path d="M1.5 3 L4.5 6 L7.5 3" transform={`rotate(${turn} 4.5 4.5)`} fill="none" stroke="currentColor" strokeWidth="1.5" />
  </svg>
);

const WindowControls = ({ pad, gap, color, size = 16 }) => (
  <WindowButtons $pad={pad} $gap={gap} $color={color}>
    <WindowButton aria-label="Minimize">
      <svg width={size} height={size} viewBox="0 0 16 16"><path d="M1 8.5 H15" stroke="currentColor" /></svg>
    </WindowButton>
    <WindowButton aria-label="Restore">
      <svg width={size} height={size} viewBox="0 0 16 16">
        <path d="M0.5 3.5 H11.5 V14.5 H0.5 Z M3.5 3 V0.5 H14.5 V11.5 H12" fill="none" stroke="currentColor" />
      </svg>
    </WindowButton>
    <WindowButton aria-label="Close">
      <svg width={size} height={size} viewBox="0 0 16 16"><path d="M1 1 L15 15 M15 1 L1 15" stroke="currentColor" /></svg>
    </WindowButton>
  </WindowButtons>
);

const RibbonGroup = ({ group }) => (
  <Group>
    <GroupTools>
      {group.tools.map((tool, i) => {
        if (tool === '|') return <RibbonLine key={i} />;
        const name = tool.replace('*', '');
        return (
          <RibbonButton key={i} aria-label={name}>
            <svg width="42" height="32" viewBox="0 0 42 32" overflow="visible" aria-hidden="true">{drawings[name]}</svg>
            {tool.endsWith('*') && <Corner />}
          </RibbonButton>
        );
      })}
    </GroupTools>
    <GroupLabel $arrow={group.arrow}>
      {group.arrow && (
        <svg width="6" height="8" aria-hidden="true">
          <path d={group.arrow === 'left' ? 'M5 0 V8 L0 4 Z' : 'M1 0 V8 L6 4 Z'} fill="#9a9a9a" />
        </svg>
      )}
      <span>{group.label}</span>
    </GroupLabel>
  </Group>
);

const ToolPalette = ({ tools, second }) => (
  <Palette $second={second}>
    {tools.map((tool, i) => (
      tool === '|' ? <ToolLine key={i} /> : <ToolButton key={i} aria-label={tool}><Icon name={tool} /></ToolButton>
    ))}
  </Palette>
);

// Axis slopes and spacing of the parallel ground grid
const origin = { x: 147, y: 512 };
const slopeX = 0.2878;
const slopeY = -0.8658;

const Grid = () => {
  const lines = [];
  for (let k = -70; k < 60; k++) {
    const y = origin.y + k * 23.78;
    lines.push(<path key={`a${k}`} d={`M-20 ${y - (origin.x + 20) * slopeX} L2400 ${y + (2400 - origin.x) * slopeX}`} />);
  }
  for (let k = -30; k < 80; k++) {
    const x = origin.x + k * 47.75;
    lines.push(<path key={`b${k}`} d={`M${x + (origin.y - 1400) / -slopeY} 1400 L${x + (origin.y + 20) / -slopeY} -20`} />);
  }
  return <g stroke="#d6d6d6" strokeWidth="1.3">{lines}</g>;
};

const Model = () => (
  <Scene aria-hidden="true">
    <Grid />
    <path d={`M0 ${origin.y - origin.x * slopeX} L1100 ${origin.y + (1100 - origin.x) * slopeX}`} stroke="#66d3b1" strokeWidth="1.3" />
    <path d={`M0 ${origin.y - origin.x * slopeY} L${origin.x - origin.y / slopeY} 0`} stroke="#ffa685" strokeWidth="1.3" />
    <g transform={`translate(${origin.x} ${origin.y})`} strokeLinejoin="round">
      <path d="M-7 0 L19 -22 L15 -25 L37 -31 V-20 L33 -22 L30 -19 L5 4 Z" fill="#ffcab5" stroke="#ff7f57" strokeWidth="1.5" />
      <path d="M4 -4 L20 -17 L18 -19 L25 -20 L24 -14 L21 -15 L8 -3 Z" fill="#ff6b57" stroke="#ff4a3a" />
      <path d="M-7 1 L0 -5 L39 8 L50 7 L62 19 L38 20 L40 16 Z" fill="#9edcc8" stroke="#2fae8a" strokeWidth="1.5" />
      <path d="M5 1 L34 8 L42 12 L30 13 L8 6 Z" fill="#45c84f" stroke="#14a85a" />
      <path d="M-7 1 L-1 -5 L5 0 L0 5 Z" fill="#c8b98d" stroke="#b37b52" />
      <path d="M0 0 V-40 M-4 -32 L0 -41 L4 -32" fill="none" stroke="#0b0bff" strokeWidth="2" />
    </g>
  </Scene>
);

const Lock = () => (
  <svg width="24" height="18" viewBox="0 0 24 18" aria-hidden="true">
    <path d="M13 9 V5 Q13 1.5 16 1.5 H20 Q22.5 1.5 22.5 5 V7" fill="none" stroke="#9f9f9f" strokeWidth="2" />
    <rect x="1" y="8" width="14" height="9" fill="#fbd784" stroke="#e0a52f" strokeWidth="1.3" />
    <path d="M8 10 V15" stroke="#c78c1c" strokeWidth="2" />
  </svg>
);

const LayerSection = ({ id, title, layers, empty, children }) => (
  <Section aria-labelledby={id}>
    <SectionTitle id={id}>
      <svg width="12" height="7" aria-hidden="true"><path d="M0 0 H12 L6 7 Z" fill="#111" /></svg>
      {title}
    </SectionTitle>
    <FilterRow>
      <FilterField>
        <FilterInput aria-label={`Filter ${title}`} placeholder="Filter..." />
        <Chevron />
      </FilterField>
      <ClearButton aria-label="Clear filter">
        <svg width="11" height="11"><path d="M1 1 L10 10 M10 1 L1 10" stroke="currentColor" strokeWidth="2" /></svg>
      </ClearButton>
    </FilterRow>
    <LayerBox>
      <LayerTable>
        <thead>
          <tr>
            <HeadCell $w="33px">St</HeadCell>
            <HeadCell $w="32px">Sn</HeadCell>
            <HeadCell $w="33px">Co</HeadCell>
            <HeadCell $w="47px">Pen</HeadCell>
            <HeadCell>Name</HeadCell>
          </tr>
        </thead>
        <tbody>
          {empty
            ? [0, 1, 2].map(i => <Row key={i}><Cell /><Cell /><Cell /><Cell /><Cell /></Row>)
            : layers.map((layer, i) => (
              <Row key={layer.name} $active={i === 0}>
                <Cell><Lock /></Cell>
                <Cell>
                  <svg width="18" height="16" aria-hidden="true"><path d="M2 9 L7 14 L16 2" fill="none" stroke="#5fbb2f" strokeWidth="2.5" /></svg>
                </Cell>
                <Cell><Swatch $color={layer.color} /></Cell>
                <Cell $align="right">0.00</Cell>
                <Cell>{layer.current ? <Current>{layer.name}</Current> : layer.name}</Cell>
              </Row>
            ))}
        </tbody>
      </LayerTable>
      <TableScroll $off={empty}>
        <Chevron turn={180} />
        <Thumb $off={empty} />
        <Chevron />
      </TableScroll>
    </LayerBox>
    {children}
  </Section>
);

const QuickTools = () => (
  <Panel>
    <PanelTitle>
      <PanelHeading>Quick tools</PanelHeading>
      <WindowButton aria-label="Dock"><svg width="16" height="12"><path d="M0 0 V12 L7 6 Z M16 0 V12 L9 6 Z" fill="#6a6a6a" /></svg></WindowButton>
      <WindowButton aria-label="Close panel"><svg width="11" height="11"><path d="M1 1 L10 10 M10 1 L1 10" stroke="#666" strokeWidth="2.5" /></svg></WindowButton>
    </PanelTitle>
    <PanelBody>
      <ModeRow>
        <ModeButton $active aria-label="Layers">
          <svg width="34" height="32" fill="none" stroke="#3c88b5" strokeWidth="1.6">
            <path d="M17 2 L32 10 L17 17 L2 10 Z M1 15 L17 23 L33 15 M1 21 L17 29 L33 21" />
          </svg>
        </ModeButton>
        <ModeButton aria-label="Display">
          <svg width="32" height="30">
            <rect x="2" y="1" width="28" height="20" fill="#f3f8fb" stroke="#3c88b5" strokeWidth="2" />
            <path d="M16 21 V28 M7 28 H25" stroke="#3c88b5" strokeWidth="4" />
          </svg>
        </ModeButton>
        <ModeButton aria-label="Results">
          <svg width="32" height="32" stroke="#4d9bcb" strokeWidth="1.5">
            <path d="M2 23 Q9 16 11 3 Q13 16 20 23 Z" fill="#b8dcf2" />
            <path d="M20 23 Q25 29 32 29" fill="none" /><path d="M1 23 H32" stroke="#2f7db0" strokeWidth="2" />
          </svg>
        </ModeButton>
        <Spacer />
        <ModeButton aria-label="Filter">
          <svg width="32" height="32" stroke="#3c88b5" strokeWidth="1.6">
            <path d="M2 1 V10 L12 20 V30 H20 V20 L30 10 V1" fill="#bfe0f4" /><path d="M2 1 H30 V6 H2 Z" fill="#fff" />
          </svg>
        </ModeButton>
      </ModeRow>
      <LayerSection id="drawing" title="Drawing layers" layers={drawingLayers}>
        <ButtonRow>
          {['New', 'Delete', 'Clear', 'Current'].map(name => <PushButton key={name}>{name}</PushButton>)}
        </ButtonRow>
      </LayerSection>
      <LayerSection id="object" title="Object layers" layers={objectLayers}>
        <ButtonRow>
          <PushButton $wide>Save &gt;</PushButton>
          <PushButton $wide>Load &gt;</PushButton>
        </ButtonRow>
      </LayerSection>
      <LayerSection id="loadcase" title="Load case layers" empty />
      <CheckLabel>
        <Check type="checkbox" />
        Hide colour and pen columns
      </CheckLabel>
    </PanelBody>
  </Panel>
);

export default function FemDesign() {
  return (
    <App>
      <GlobalStyle />
      <TitleBar>
        <MenuBar>
          <Logo width="30" height="28" viewBox="0 0 30 28" fill="none" stroke="#fff" strokeWidth="1.8">
            <path d="M1 14 L8 1 H22 L29 14 L22 27 H8 Z M14 14 L8 1 M14 14 L22 1 M1 14 H14 M14 14 L29 14 M8 27 L14 14 L22 27 M1 14 L22 1" />
          </Logo>
          {menus.map(menu => <MenuButton key={menu}>{menu}</MenuButton>)}
        </MenuBar>
        <span>FEM-Design 22 - 3D Structure - Untitled</span>
        <WindowControls pad={12} gap={28} color="#dbe6f0" />
      </TitleBar>

      <TabBar>
        {tabs.map((tab, i) => <Tab key={tab} $active={i === 0}>{tab}</Tab>)}
        <Spacer />
        <InterfacePicker>
          User interface:
          <SelectBox>
            <Select defaultValue="Full"><option>Full</option></Select>
            <svg width="9" height="6" aria-hidden="true"><path d="M0 0 H9 L4.5 6 Z" fill="#222" /></svg>
          </SelectBox>
        </InterfacePicker>
        <WindowControls pad={6} gap={15} color="#555555" size={12} />
      </TabBar>

      <Ribbon>
        {groups.map(group => <RibbonGroup key={group.label} group={group} />)}
        <Spacer />
        <RibbonEdge>
          {sideGroups.map(group => <RibbonGroup key={group.label} group={group} />)}
        </RibbonEdge>
      </Ribbon>

      <ViewRow>
        <ViewBar>
          {viewTools.map((tool, i) => (
            tool === '|'
              ? <ViewLine key={i} />
              : <ViewButton key={i} aria-label={tool} $view={viewDirections.includes(tool)} $active={tool === 'shadeWire'}><Icon name={tool} /></ViewButton>
          ))}
        </ViewBar>
      </ViewRow>

      <Workspace>
        <Dock>
          <DockColumn $first>
            <ToolPalette tools={fileTools} />
            <PaletteGap />
            <ToolPalette tools={drawTools} second />
          </DockColumn>
          <DockColumn><ToolPalette tools={generalTools} /></DockColumn>
          <DockColumn><ToolPalette tools={modifyTools} /></DockColumn>
        </Dock>

        <Viewport>
          <Model />
          <SceneRow>
            <Norm>Eurocode (NA: Swedish)</Norm>
            <VScroll>
              <ScrollButton $off aria-label="Scroll up"><Chevron turn={180} /></ScrollButton>
              <ScrollButton $off aria-label="Scroll down"><Chevron /></ScrollButton>
            </VScroll>
          </SceneRow>
          <SheetRow>
            <SheetTabs>
              <SheetNav>
                <svg width="80" height="12" fill="#c4c4c4" aria-hidden="true">
                  <path d="M3 0 H5 V12 H3 Z M13 0 V12 L6 6 Z M34 0 V12 L27 6 Z M49 0 V12 L56 6 Z M68 0 V12 L75 6 Z M76 0 H78 V12 H76 Z" />
                </svg>
              </SheetNav>
              <SheetTab>Model 1.</SheetTab>
              <SheetRest />
            </SheetTabs>
            <HScroll>
              <ScrollButton aria-label="Scroll left"><Chevron turn={90} /></ScrollButton>
              <ScrollButton aria-label="Scroll right"><Chevron turn={-90} /></ScrollButton>
            </HScroll>
          </SheetRow>
        </Viewport>

        <QuickTools />
      </Workspace>

      <StatusBar>
        <CommandLabel>
          Enter command:
          <CommandInput />
        </CommandLabel>
        <Spacer />
        <PaneButton $w={85}>(Selection)</PaneButton>
        <PaneButton $w={29} aria-label="View"><Icon name="box" size={18} /></PaneButton>
        <CoordinatePane>
          <Coordinate>52.067 m</Coordinate>
          <Coordinate>2.795 m</Coordinate>
          <Coordinate>0.000 m</Coordinate>
        </CoordinatePane>
        <PaneButton $w={58}>Layers</PaneButton>
        <Pane $off $pad={4}>
          {guides.map(name => <SnapButton key={name} aria-label={name}><Icon name={name} size={17} /></SnapButton>)}
        </Pane>
        <SnapGroup>
          <PaneButton $w={50}>Snap</PaneButton>
          <Pane $gap={3}>
            {snaps.map(([name, active]) => <SnapButton key={name} $active={active} aria-label={name}><Icon name={name} size={17} /></SnapButton>)}
          </Pane>
        </SnapGroup>
      </StatusBar>
      <TaskStrip>
        <StripPart $w="60px" $c="#1b3346" />
        <StripPart $w="360px" $c="#bfbfbf" />
        <StripPart $w="1430px" $c="#1d2c4a" />
      </TaskStrip>

      <Markup fill="none" stroke="#22b14c" strokeWidth="7" strokeLinecap="round" aria-hidden="true">
        <rect x="7" y="39" width="1644" height="146" rx="14" />
        <rect x="3" y="190" width="119" height="790" rx="16" />
        <path d="M876 391 L706 200 M728 205 L705 199 L710 219" strokeWidth="5" />
        <path d="M527 467 L138 590 M151 578 L136 591 L154 596" strokeWidth="5" />
      </Markup>
    </App>
  );
}
